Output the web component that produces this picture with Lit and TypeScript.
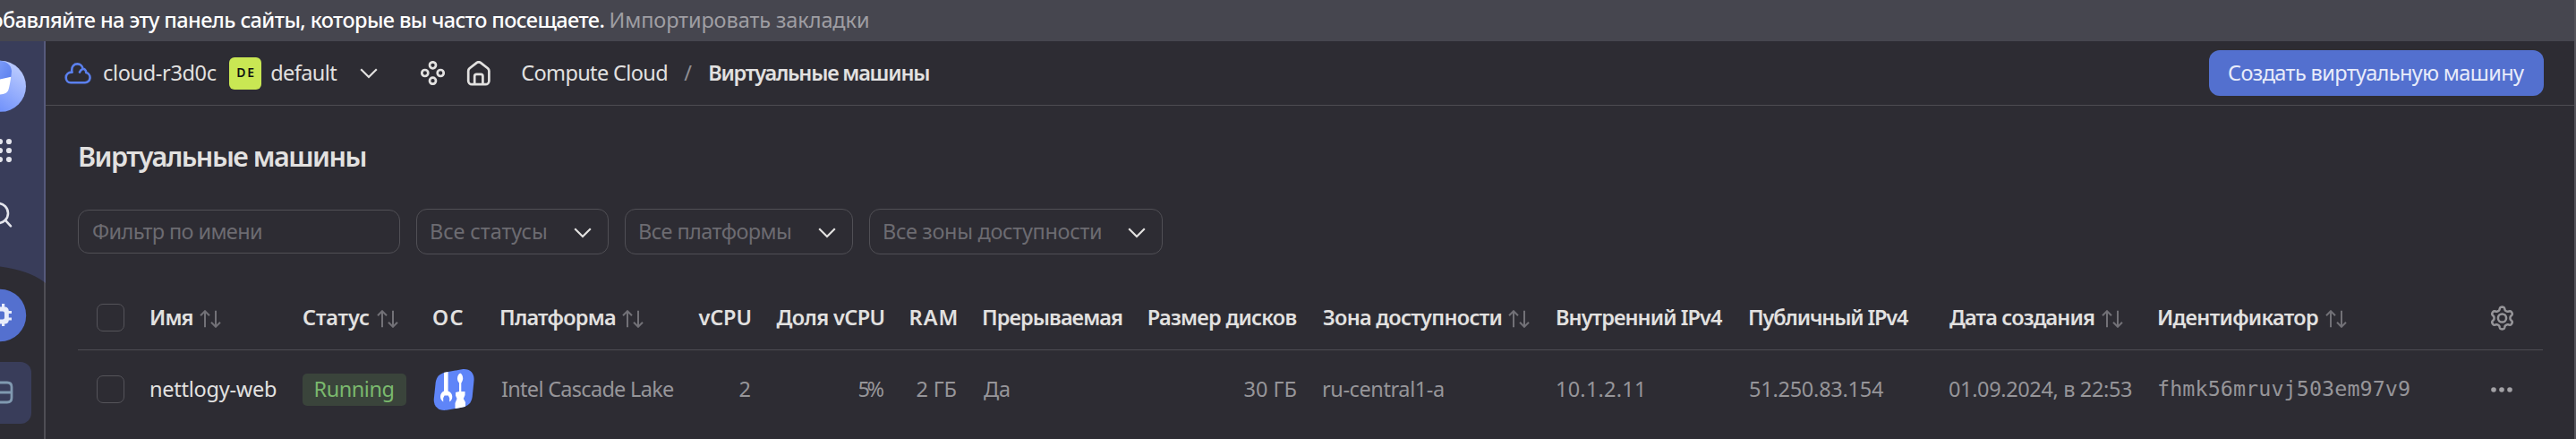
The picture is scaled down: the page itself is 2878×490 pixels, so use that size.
import { LitElement, html, css } from 'lit';
import { customElement, property } from 'lit/decorators.js';
import { classMap } from 'lit/directives/class-map.js';
import { styleMap } from 'lit/directives/style-map.js';

const FAMILY = 'Noto Sans';
const ctx = document.createElement('canvas').getContext('2d')!;

/** Single line of text whose tracking is computed so that its ink fills `width`. */
@customElement('fit-text')
class FitText extends LitElement {
  @property() text = '';
  @property({ type: Number }) width = 0;
  @property({ type: Number }) weight = 400;
  @property({ type: Number }) size = 23.5;
  @property() sample = '';
  @property() family = FAMILY;

  static styles = css`
    :host { display: block; flex: none; }
    .t { display: block; white-space: pre; line-height: 30px; padding-bottom: 2px; }
  `;

  render() {
    const ref = this.sample || this.text;
    ctx.font = `${this.weight} ${this.size}px "${this.family}"`;
    const m = ctx.measureText(ref);
    const ink = m.actualBoundingBoxLeft + m.actualBoundingBoxRight;
    const ls = ref.length > 1 ? (this.width - ink) / (ref.length - 1) : 0;
    return html`<span class="t" style=${styleMap({
      fontFamily: `"${this.family}", "Noto Sans", sans-serif`,
      fontSize: `${this.size}px`,
      fontWeight: String(this.weight),
      letterSpacing: `${ls.toFixed(3)}px`,
      marginLeft: `${m.actualBoundingBoxLeft.toFixed(2)}px`,
      marginRight: `${(m.actualBoundingBoxRight - m.width - ls).toFixed(2)}px`,
    })}>${this.text}</span>`;
  }
}

const HEAD = 600;
const t = (text: string, width: number, weight = 400, size = 23.5, family = FAMILY) =>
  html`<fit-text .text=${text} .width=${width} .weight=${weight} .size=${size} .family=${family}></fit-text>`;

const chevron = html`<svg class="chev" width="20" height="12" viewBox="0 0 20 12"><path d="M1.2 1.2 10 10 18.8 1.2"/></svg>`;
const sortIcon = html`<svg class="sort" width="24" height="20" viewBox="0 0 24 20"><path d="M6 19.2V1.4M1 6.2 6 1.2 11 6.2M18 .8V18.6M13 13.8 18 18.8 23 13.8"/></svg>`;

type Col = { title: string; w: number; sort?: boolean; right?: boolean };
const COLS: Col[] = [
  { title: 'Имя', w: 46.6, sort: true },
  { title: 'Статус', w: 74, sort: true },
  { title: 'ОС', w: 33.6 },
  { title: 'Платформа', w: 127, sort: true },
  { title: 'vCPU', w: 58, right: true },
  { title: 'Доля vCPU', w: 120, right: true },
  { title: 'RAM', w: 51, right: true },
  { title: 'Прерываемая', w: 155 },
  { title: 'Размер дисков', w: 164.7, right: true },
  { title: 'Зона доступности', w: 198.5, sort: true },
  { title: 'Внутренний IPv4', w: 185 },
  { title: 'Публичный IPv4', w: 178 },
  { title: 'Дата создания', w: 162, sort: true },
  { title: 'Идентификатор', w: 178, sort: true },
];

// Six-lobed cog outline centred in a 28px box.
const gearPath = (() => {
  const pts: string[] = [];
  for (let i = 0; i <= 120; i++) {
    const a = (i / 120) * Math.PI * 2;
    const c = Math.cos(6 * a);
    const r = 10.7 + 1.7 * Math.tanh(1.8 * c) / Math.tanh(1.8);
    pts.push(`${(13.5 + r * Math.sin(a)).toFixed(2)} ${(14 - r * Math.cos(a)).toFixed(2)}`);
  }
  return `M${pts.join('L')}Z`;
})();

@customElement('app-root')
class AppRoot extends LitElement {
  static styles = css`
    :host { display: block; width: 2878px; height: 490px; overflow: hidden; background: #2d2c33; color: #e2e1e0; }
    * { box-sizing: border-box; }
    svg { display: block; flex: none; }
    .page { display: flex; flex-direction: column; height: 490px; border-right: 2px solid #55545b; }
    .banner { display: flex; flex: none; height: 46px; padding-bottom: 1px; align-items: center; gap: 8px; background: #46464f; }
    .tip { display: flex; justify-content: flex-end; width: 674.5px; overflow: hidden; color: #fff; }
    .import { color: #9f9ea3; }
    .shell { display: flex; flex: 1; min-height: 0; }
    .side { position: relative; flex: none; width: 51px; display: flex; flex-direction: column; overflow: hidden; }
    .side-bg { position: absolute; left: 0; top: 0; }
    .side-item { position: relative; }
    .logo { margin-top: 21px; }
    .apps { margin-top: 28px; }
    .search { margin-top: 43px; }
    .gear-btn { margin-top: 67px; }
    .tile { margin-top: 22px; }
    .main { flex: 1; min-width: 0; display: flex; flex-direction: column; }
    .top { display: flex; flex: none; height: 72px; align-items: center; padding: 0 34px 0 21px; border-bottom: 1px solid #4d4c52; }
    .badge { display: grid; place-items: center; width: 36px; height: 36px; margin: 0 11px 0 14.5px; border-radius: 6px; background: #c9e753; color: #111; flex: none; }
    .cloud { margin-right: 14px; }
    .chev { fill: none; stroke: #e2e1e0; stroke-width: 2.2; }
    .top .chev { margin: 1px 48px 0 26px; }
    .line { fill: none; stroke: #e2e1e0; stroke-linejoin: round; }
    .home { margin: 0 34px 0 24px; }
    .slash { margin: 0 20px 0 19px; color: #8f8e93; }
    .create { display: grid; place-items: center; width: 374px; height: 51px; margin-left: auto; border-radius: 12px; background: #5370cf; color: #e8ecfa; }
    .body { padding: 41px 35px 0 36px; display: flex; flex-direction: column; }
    .title { padding-left: 2px; }
    .filters { display: flex; align-items: center; gap: 18px; margin-top: 42px; }
    .field { display: flex; align-items: center; justify-content: space-between; height: 51px; border: 1px solid #504f55; border-radius: 12px; color: #6c6b71; padding: 0 18px 0 16px; }
    .field .chev { margin-top: 3px; }
    .input { width: 360px; height: 49px; }
    .status { width: 215px; }
    .platform { width: 255px; }
    .zone { width: 328px; }
    .table { margin-top: 35px; }
    .row { display: grid; align-items: center; padding-left: 21px;
      grid-template-columns: 60px 170px 145px 76px 222px 87px 149px 81px 185px 195px 261px 215px 223px 234px 371px 59px; }
    .head { height: 72px; border-bottom: 1px solid #4d4c52; }
    .vm { height: 87px; color: #969599; }
    .cell { display: flex; align-items: center; padding-left: 1px; }
    .right { justify-content: flex-end; padding-right: 29.5px; }
    .check { width: 31px; height: 31px; border: 1px solid #55545a; border-radius: 7px; }
    .sort { margin: 2px 0 0 7.5px; fill: none; stroke: #727177; stroke-width: 2; }
    .name { color: #e2e1e0; }
    .run { display: grid; place-items: center; width: 116px; height: 36px; border-radius: 5px; background: #3a443b; color: #7ab96d; }
  `;

  render() {
    const td = (c: unknown, cls: Record<string, boolean> = {}) =>
      html`<div class=${classMap({ cell: true, ...cls })}>${c}</div>`;
    const r = { right: true };
    return html`
      <div class="page">
        <div class="banner">
          <div class="tip"><fit-text .text=${'обавляйте на эту панель сайты, которые вы часто посещаете.'}
            .sample=${'на эту панель сайты, которые вы часто посещаете.'} .width=${561.5} .weight=${500}></fit-text></div>
          <div class="import">${t('Импортировать закладки', 287.4)}</div>
        </div>
        <div class="shell">
          ${this.sidebar()}
          <div class="main">
            <div class="top">
              <svg class="cloud" width="30" height="24" viewBox="0 0 30 24"><path fill="none" stroke="#5b80ee" stroke-width="2.6" stroke-linecap="round" stroke-linejoin="round" d="M7 22.3H23a5.7 5.7 0 0 0 1.3-11.2C24.2 7.6 21.3 6.6 20.6 7 20.2 3.500 17.500 1.400 14.500 1.400 10.500 1.400 8.200 4.500 8.200 8.200 8.200 9.500 8.400 10.300 8.600 10.700 4.500 10.300 1.700 13 1.700 16.500 1.700 19.800 4 22.300 7 22.300ZM17 10.600C17.800 8.600 19 7.400 20.600 7"/></svg>
              ${t('cloud-r3d0c', 125.7)}
              <div class="badge">${t('DE', 18, 600, 14)}</div>
              ${t('default', 73)}
              ${chevron}
              <svg class="line" width="27" height="27" viewBox="0 0 27 27" stroke-width="2.7"><circle cx="13.500" cy="4.800" r="3.500"/><circle cx="13.500" cy="22.200" r="3.500"/><circle cx="4.800" cy="13.500" r="3.500"/><circle cx="22.200" cy="13.500" r="3.500"/></svg>
              <svg class="line home" width="28" height="28" viewBox="0 0 28 28" stroke-width="2.700"><path d="M2.200 11.200C2.200 9.800 2.600 9.200 3.600 8.300L11.800 1.900C13.200 1 14.400 1 15.800 1.900L24 8.300C25 9.200 25.400 9.800 25.400 11.200V22.200A4 4 0 0 1 21.400 26.200H6.200A4 4 0 0 1 2.200 22.200ZM9.200 26V17A2.200 2.200 0 0 1 11.400 14.800H16.200A2.200 2.200 0 0 1 18.400 17V26"/></svg>
              ${t('Compute Cloud', 162)}
              <div class="slash">${t('/', 9)}</div>
              ${t('Виртуальные машины', 245, HEAD)}
              <div class="create">${t('Создать виртуальную машину', 330)}</div>
            </div>
            <div class="body">
              <div class="title">${t('Виртуальные машины', 319.5, HEAD, 30.5)}</div>
              <div class="filters">
                <div class="field input">${t('Фильтр по имени', 188)}</div>
                <div class="field status">${t('Все статусы', 128)}${chevron}</div>
                <div class="field platform">${t('Все платформы', 168)}${chevron}</div>
                <div class="field zone">${t('Все зоны доступности', 242)}${chevron}</div>
              </div>
              <div class="table">
                <div class="row head">
                  <div class="check"></div>
                  ${COLS.map((c) => td(html`${t(c.title, c.w, HEAD)}${c.sort ? sortIcon : ''}`, { right: !!c.right }))}
                  <svg width="28" height="28" viewBox="0 0 28 28" fill="none" stroke="#969599" stroke-width="2.500" stroke-linejoin="round"><path d=${gearPath}/><circle cx="13.500" cy="14" r="4.600"/></svg>
                </div>
                <div class="row vm">
                  <div class="check"></div>
                  ${td(t('nettlogy-web', 140), { name: true })}
                  <div class="run">${t('Running', 87)}</div>
                  ${this.osIcon()}
                  ${td(t('Intel Cascade Lake', 193))}
                  ${td(t('2', 11), r)}
                  ${td(t('5%', 28), r)}
                  ${td(t('2 ГБ', 44), r)}
                  ${td(t('Да', 29))}
                  ${td(t('30 ГБ', 58), r)}
                  ${td(t('ru-central1-a', 134))}
                  ${td(t('10.1.2.11', 95))}
                  ${td(t('51.250.83.154', 149))}
                  ${td(t('01.09.2024, в 22:53', 204))}
                  ${td(t('fhmk56mruvj503em97v9', 280, 400, 23.4, 'DejaVu Sans Mono'))}
                  <svg width="28" height="8" viewBox="0 0 28 8" fill="#a3a2a6"><circle cx="4" cy="4" r="2.800"/><circle cx="13" cy="4" r="2.800"/><circle cx="22" cy="4" r="2.800"/></svg>
                </div>
              </div>
            </div>
          </div>
        </div>
      </div>`;
  }

  private sidebar() {
    return html`<div class="side">
      <svg class="side-bg" width="51" height="444" viewBox="0 0 51 444">
        <rect width="51" height="444" fill="#2d2c33"/><path fill="#4f4e55" d="M49 260h2v184h-2z"/>
        <path fill="#393d5a" d="M0 0H49V268.500C38 260 22 254.500 0 251.500Z"/><path fill="#565a7c" d="M49 0h2v270l-2-1.500z"/>
      </svg>
      <svg class="side-item logo" width="30" height="58" viewBox="0 0 30 58">
        <defs>
          <linearGradient id="a" x1="0.900" y1="0" x2="0.200" y2="1"><stop offset="0" stop-color="#c4d2ff"/><stop offset="1" stop-color="#6387fa"/></linearGradient>
          <linearGradient id="b" x1="0" y1="0" x2="1" y2="1"><stop offset="0" stop-color="#7a9af8"/><stop offset="1" stop-color="#5c80ee"/></linearGradient>
        </defs>
        <circle cx="0.500" cy="29.300" r="28.500" fill="url(#a)"/>
        <path fill="url(#b)" d="M0 .8C7 1.500 12 5 13 12L12.300 19.500 0 22Z"/>
        <path fill="#fff" d="M0 21.500 12.300 18.800C11.500 24 10.500 30 9.500 33 8.500 36.500 5 38.300 0 38.500Z"/>
      </svg>
      <svg class="side-item apps" width="16" height="28" viewBox="0 0 16 28" fill="#e4e5ec">
        <circle cx="0" cy="5" r="3.100"/><circle cx="10" cy="5" r="3.100"/><circle cx="0" cy="15" r="3.100"/><circle cx="10" cy="15" r="3.100"/><circle cx="0" cy="25" r="3.100"/><circle cx="10" cy="25" r="3.100"/>
      </svg>
      <svg class="side-item search" width="16" height="31" viewBox="0 0 16 31" fill="none" stroke="#e4e5ec" stroke-width="2.600" stroke-linecap="round"><circle cx="-2" cy="14" r="11"/><path d="M6 21.800 12 28.300"/></svg>
      <svg class="side-item gear-btn" width="30" height="60" viewBox="0 0 30 60">
        <circle cx="0" cy="30" r="29.200" fill="#5470cf"/>
        <path fill="#e8ecfa" fill-rule="evenodd" d="M0 20.500H2V17H5.200V20.500Q9.500 20.500 9.800 25H13V28H9.800V32.500H13V35.500H9.800Q9.500 39.500 5.200 39.500V42H2V39.500H0V34.500H3Q5 34.500 5 32.500V27.500Q5 25.500 3 25.500H0Z"/>
      </svg>
      <svg class="side-item tile" width="36" height="70" viewBox="0 0 36 70">
        <rect x="-20" width="55" height="69" rx="12" fill="#393d5a"/>
        <path fill="none" stroke="#8099b0" stroke-width="2.800" d="M-2 23H8Q13 23 13 28V40Q13 45 8 45H-2M-2 34H13"/>
      </svg>
    </div>`;
  }

  private osIcon() {
    return html`<svg width="48" height="48" viewBox="0 0 48 48">
      <defs><clipPath id="s"><path d="M15 4.500 33 1.200C42 0 47.300 5.500 46.500 14L44.700 32C43.800 38.500 40 42.300 34 43.500L16 46.800C7 48 1 42.500 1.800 34L3.700 16C4.500 9.500 8.500 5.800 15 4.500Z"/></clipPath></defs>
      <g clip-path="url(#s)"><rect width="48" height="48" fill="#5f85f8"/>
        <path fill="#fff" d="M13 0h4.600V25.500C20.500 26.500 22.300 29 22.300 31.800 22.300 34.500 21 36.500 19.200 37.400V33.200L17.800 30.500H13.600L12.200 33.200V37.400C10.200 36.300 9 34.300 9 31.800 9 29 10.500 26.500 13 25.500ZM31.200 5.500C33.500 6.500 34.300 9.500 34.200 12 34 13.800 33 15.500 32.300 16.500V26H36.500V30L34.800 34 37 38V48H25.500V39L27.500 34 26 30.500V27L30 26V16.500C28.800 15 28 13.500 28 11.500 28 9 29 6.500 31.200 5.500Z"/></g>
    </svg>`;
  }
}
